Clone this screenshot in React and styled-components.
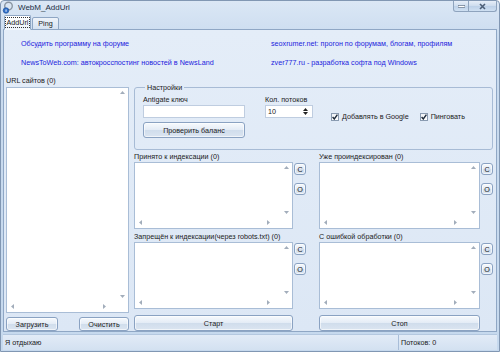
import React from 'react';
import styled, { createGlobalStyle } from 'styled-components';

const GlobalStyle = createGlobalStyle`
  html, body {
    margin: 0;
    padding: 0;
    background: #ffffff;
  }
  body {
    font-family: "Liberation Sans", Arial, sans-serif;
    font-size: 7.2px;
    color: #1b1b1b;
  }
`;

const Window = styled.div`
  width: 500px;
  height: 352px;
  box-sizing: border-box;
  display: flex;
  flex-direction: column;
  background: linear-gradient(#dbe7f5, #c9dbef 40px, #c6d9ee);
  border: 1px solid #8197b3;
  border-radius: 4px 4px 0 0;
  overflow: hidden;
`;

const TitleBar = styled.div`
  height: 14px;
  display: flex;
  align-items: center;
  padding: 0 0 0 1px;
`;

const TitleText = styled.span`
  margin-left: 4px;
  font-size: 8px;
  color: #1e2f45;
`;

const WindowButtons = styled.div`
  margin-left: auto;
  align-self: flex-start;
  display: flex;
  margin-right: 2px;
`;

const CaptionButton = styled.div`
  width: ${p => (p.wide ? '28px' : '16px')};
  height: 11px;
  box-sizing: border-box;
  border: 1px solid #8ea3bd;
  border-top: none;
  border-left: ${p => (p.wide ? 'none' : '1px solid #8ea3bd')};
  border-radius: ${p => (p.wide ? '0 0 3px 0' : '0 0 0 3px')};
  background: linear-gradient(#e6eef8, #cddcee 50%, #bcd0e8 51%, #cfe0f2);
  display: flex;
  align-items: center;
  justify-content: center;
`;

const TabBar = styled.div`
  height: 15px;
  display: flex;
  align-items: flex-end;
  padding-left: 3px;
  gap: 1px;
`;

const Tab = styled.div`
  height: ${p => (p.active ? '15px' : '13px')};
  width: 27px;
  box-sizing: border-box;
  border: 1px solid #8ea6c4;
  border-bottom: ${p => (p.active ? '1px solid #f2f7fc' : '1px solid #8ea6c4')};
  border-radius: 2px 2px 0 0;
  background: ${p =>
    p.active ? 'linear-gradient(#ffffff, #eef4fb)' : 'linear-gradient(#eef3fa, #d5e2f1)'};
  display: flex;
  align-items: center;
  justify-content: center;
  margin-bottom: -1px;
  position: relative;
  z-index: ${p => (p.active ? 2 : 1)};
`;

const TabLabel = styled.span`
  padding: 0 1px;
  line-height: 9px;
  outline: ${p => (p.focused ? '1px dotted #333' : 'none')};
`;

const Panel = styled.div`
  flex: 1;
  margin: 0 2px;
  border: 1px solid #8fa7c5;
  background: linear-gradient(#e4edf8, #dce7f5);
  display: flex;
  flex-direction: column;
`;

const Links = styled.div`
  display: grid;
  grid-template-columns: 250px 1fr;
  grid-auto-rows: 19px;
  padding: 4px 0 0 17px;
`;

const Link = styled.a`
  color: #2222dd;
  text-decoration: none;
  display: flex;
  align-items: center;
`;

const Main = styled.div`
  display: flex;
  padding: 3px 0 0 2px;
  gap: 5px;
`;

const LeftColumn = styled.div`
  width: 123px;
  display: flex;
  flex-direction: column;
`;

const Label = styled.div`
  height: ${p => p.h || 10}px;
  line-height: ${p => p.h || 10}px;
  white-space: nowrap;
`;

const ListFrame = styled.div`
  height: ${p => p.h}px;
  box-sizing: border-box;
  border: 1px solid #a9bdd6;
  background: #ffffff;
  display: grid;
  grid-template-columns: 1fr 11px;
  grid-template-rows: 1fr 11px;
`;

const VScroll = styled.div`
  display: flex;
  flex-direction: column;
  justify-content: space-between;
  align-items: center;
  padding: 3px 0;
`;

const HScroll = styled.div`
  display: flex;
  justify-content: space-between;
  align-items: center;
  padding: 0 11px 0 4px;
`;

const Arrow = ({ dir }) => {
  const pts = {
    up: '0,3 2.5,0 5,3',
    down: '0,0 2.5,3 5,0',
    left: '3,0 0,2.5 3,5',
    right: '0,0 3,2.5 0,5',
  }[dir];
  const vert = dir === 'up' || dir === 'down';
  return (
    <svg width={vert ? 5 : 3} height={vert ? 3 : 5} viewBox={vert ? '0 0 5 3' : '0 0 3 5'}>
      <polygon points={pts} fill="#a2adbb" />
    </svg>
  );
};

const ListBox = ({ h }) => (
  <ListFrame h={h}>
    <div />
    <VScroll>
      <Arrow dir="up" />
      <Arrow dir="down" />
    </VScroll>
    <HScroll>
      <Arrow dir="left" />
      <Arrow dir="right" />
    </HScroll>
    <div />
  </ListFrame>
);

const Button = styled.button`
  font-family: inherit;
  font-size: 7.2px;
  color: #1b1b1b;
  height: ${p => p.h || 14}px;
  width: ${p => (p.w ? `${p.w}px` : 'auto')};
  padding: 0;
  box-sizing: border-box;
  border: 1px solid #8aa2c2;
  border-radius: 3px;
  background: linear-gradient(#f7fafd, #e4ecf6 48%, #d0ddec 52%, #dbe5f1);
  box-shadow: inset 0 0 0 1px rgba(255, 255, 255, 0.6);
  display: flex;
  align-items: center;
  justify-content: center;
`;

const LeftButtons = styled.div`
  display: flex;
  justify-content: space-between;
  padding: 4px 0 0 0;
`;

const RightColumn = styled.div`
  width: 360px;
  display: flex;
  flex-direction: column;
`;

const GroupBox = styled.fieldset`
  margin: 8px 0 0 0;
  padding: 3px 0 0 8px;
  height: 67px;
  box-sizing: border-box;
  border: 1px solid #a7bbd5;
  border-radius: 3px;
  width: 359px;
  display: flex;
  gap: 20px;
`;

const Legend = styled.legend`
  padding: 0 2px;
  margin-left: 2px;
  line-height: 9px;
`;

const Field = styled.div`
  display: flex;
  flex-direction: column;
  width: ${p => p.w}px;
`;

const TextInput = styled.div`
  height: 13px;
  box-sizing: border-box;
  border: 1px solid #bfcde0;
  background: #ffffff;
  margin-bottom: 4px;
  display: flex;
  align-items: center;
  padding-left: 2px;
  justify-content: space-between;
`;

const Spin = styled.div`
  display: flex;
  flex-direction: column;
  gap: 1px;
  margin-right: 4px;
`;

const Checks = styled.div`
  display: flex;
  gap: 11px;
  padding-top: 15px;
  margin-left: -2px;
`;

const CheckRow = styled.label`
  display: flex;
  align-items: center;
  gap: 3px;
  height: 13px;
`;

const CheckBox = styled.span`
  width: 8px;
  height: 8px;
  box-sizing: border-box;
  border: 1px solid #8a9bb1;
  background: linear-gradient(#f0f3f7, #ffffff);
  display: flex;
  align-items: center;
  justify-content: center;
`;

const Grids = styled.div`
  display: grid;
  grid-template-columns: 172px 174px;
  column-gap: 13px;
  margin-top: 2px;
`;

const ListCell = styled.div`
  display: flex;
  flex-direction: column;
`;

const ListRow = styled.div`
  display: flex;
  gap: 1px;
  margin-bottom: ${p => p.mb || 0}px;
`;

const ListSlot = styled.div`
  flex: 1;
`;

const SideButtons = styled.div`
  display: flex;
  flex-direction: column;
  gap: 8px;
  padding-top: 1px;
`;

const RunButton = styled(Button)`
  margin: 6px 13px 0 0;
`;

const StatusBar = styled.div`
  height: 15px;
  margin: 2px 2px 1px 2px;
  display: flex;
  align-items: center;
  border-top: 1px solid #b4c8e0;
  background: linear-gradient(#e2ebf7, #d3e1f1);
`;

const StatusCell = styled.div`
  flex: ${p => (p.grow ? 1 : 'none')};
  width: ${p => (p.w ? `${p.w}px` : 'auto')};
  height: 100%;
  display: flex;
  align-items: center;
  padding-left: 2px;
  border-left: ${p => (p.divider ? '1px solid #a8bdd8' : 'none')};
`;

const Check = () => (
  <svg width="6" height="6" viewBox="0 0 6 6">
    <polyline points="0.6,3 2.3,5 5.4,0.6" fill="none" stroke="#1d2a3a" strokeWidth="1.4" />
  </svg>
);

const AppIcon = () => (
  <svg width="12" height="13" viewBox="0 0 12 13">
    <circle cx="6.5" cy="5" r="3.8" fill="none" stroke="#8b96a3" strokeWidth="1.4" />
    <circle cx="4" cy="9.5" r="2.8" fill="#2f6fc9" stroke="#1b4d94" strokeWidth="0.6" />
    <rect x="3.6" y="8.4" width="0.9" height="2.4" fill="#ffffff" />
  </svg>
);

const ListPane = ({ title, mb }) => (
  <ListCell>
    <Label>{title}</Label>
    <ListRow mb={mb}>
      <ListSlot>
        <ListBox h={67} />
      </ListSlot>
      <SideButtons>
        <Button w={12} h={12}>C</Button>
        <Button w={12} h={12}>O</Button>
      </SideButtons>
    </ListRow>
  </ListCell>
);

export default function App() {
  return (
    <>
      <GlobalStyle />
      <Window>
        <TitleBar>
          <AppIcon />
          <TitleText>WebM_AddUrl</TitleText>
          <WindowButtons>
            <CaptionButton>
              <svg width="7" height="3" viewBox="0 0 7 3">
                <rect x="0" y="0.5" width="7" height="2" fill="#ffffff" stroke="#4d5f77" strokeWidth="0.6" />
              </svg>
            </CaptionButton>
            <CaptionButton wide>
              <svg width="7" height="7" viewBox="0 0 7 7">
                <path d="M1 1 L6 6 M6 1 L1 6" stroke="#4d5f77" strokeWidth="1.6" />
              </svg>
            </CaptionButton>
          </WindowButtons>
        </TitleBar>
        <TabBar>
          <Tab active>
            <TabLabel focused>AddUrl</TabLabel>
          </Tab>
          <Tab>
            <TabLabel>Ping</TabLabel>
          </Tab>
        </TabBar>
        <Panel>
          <Links>
            <Link>Обсудить программу на форуме</Link>
            <Link>seoxrumer.net: прогон по форумам, блогам, профилям</Link>
            <Link>NewsToWeb.com: автокросспостинг новостей в NewsLand</Link>
            <Link>zver777.ru - разработка софта под Windows</Link>
          </Links>
          <Main>
            <LeftColumn>
              <Label h={12}>URL сайтов (0)</Label>
              <ListBox h={226} />
              <LeftButtons>
                <Button w={52} h={14}>Загрузить</Button>
                <Button w={50} h={14}>Очистить</Button>
              </LeftButtons>
            </LeftColumn>
            <RightColumn>
              <GroupBox>
                <Legend>Настройки</Legend>
                <Field w={102}>
                  <Label h={10}>Antigate ключ</Label>
                  <TextInput />
                  <Button h={16}>Проверить баланс</Button>
                </Field>
                <Field w={48}>
                  <Label h={10}>Кол. потоков</Label>
                  <TextInput>
                    <span>10</span>
                    <Spin>
                      <svg width="5" height="3" viewBox="0 0 5 3">
                        <polygon points="0,3 2.5,0 5,3" fill="#222" />
                      </svg>
                      <svg width="5" height="3" viewBox="0 0 5 3">
                        <polygon points="0,0 2.5,3 5,0" fill="#222" />
                      </svg>
                    </Spin>
                  </TextInput>
                </Field>
                <Checks>
                  <CheckRow>
                    <CheckBox>
                      <Check />
                    </CheckBox>
                    Добавлять в Google
                  </CheckRow>
                  <CheckRow>
                    <CheckBox>
                      <Check />
                    </CheckBox>
                    Пинговать
                  </CheckRow>
                </Checks>
              </GroupBox>
              <Grids>
                <ListPane title="Принято к индексации (0)" mb={3} />
                <ListPane title="Уже проиндексирован (0)" mb={3} />
                <ListPane title="Запрещён к индексации(через robots.txt) (0)" />
                <ListPane title="С ошибкой обработки (0)" />
                <RunButton h={16}>Старт</RunButton>
                <RunButton h={16}>Стоп</RunButton>
              </Grids>
            </RightColumn>
          </Main>
        </Panel>
        <StatusBar>
          <StatusCell grow>Я отдыхаю</StatusCell>
          <StatusCell w={96} divider>
            Потоков: 0
          </StatusCell>
        </StatusBar>
      </Window>
    </>
  );
}
